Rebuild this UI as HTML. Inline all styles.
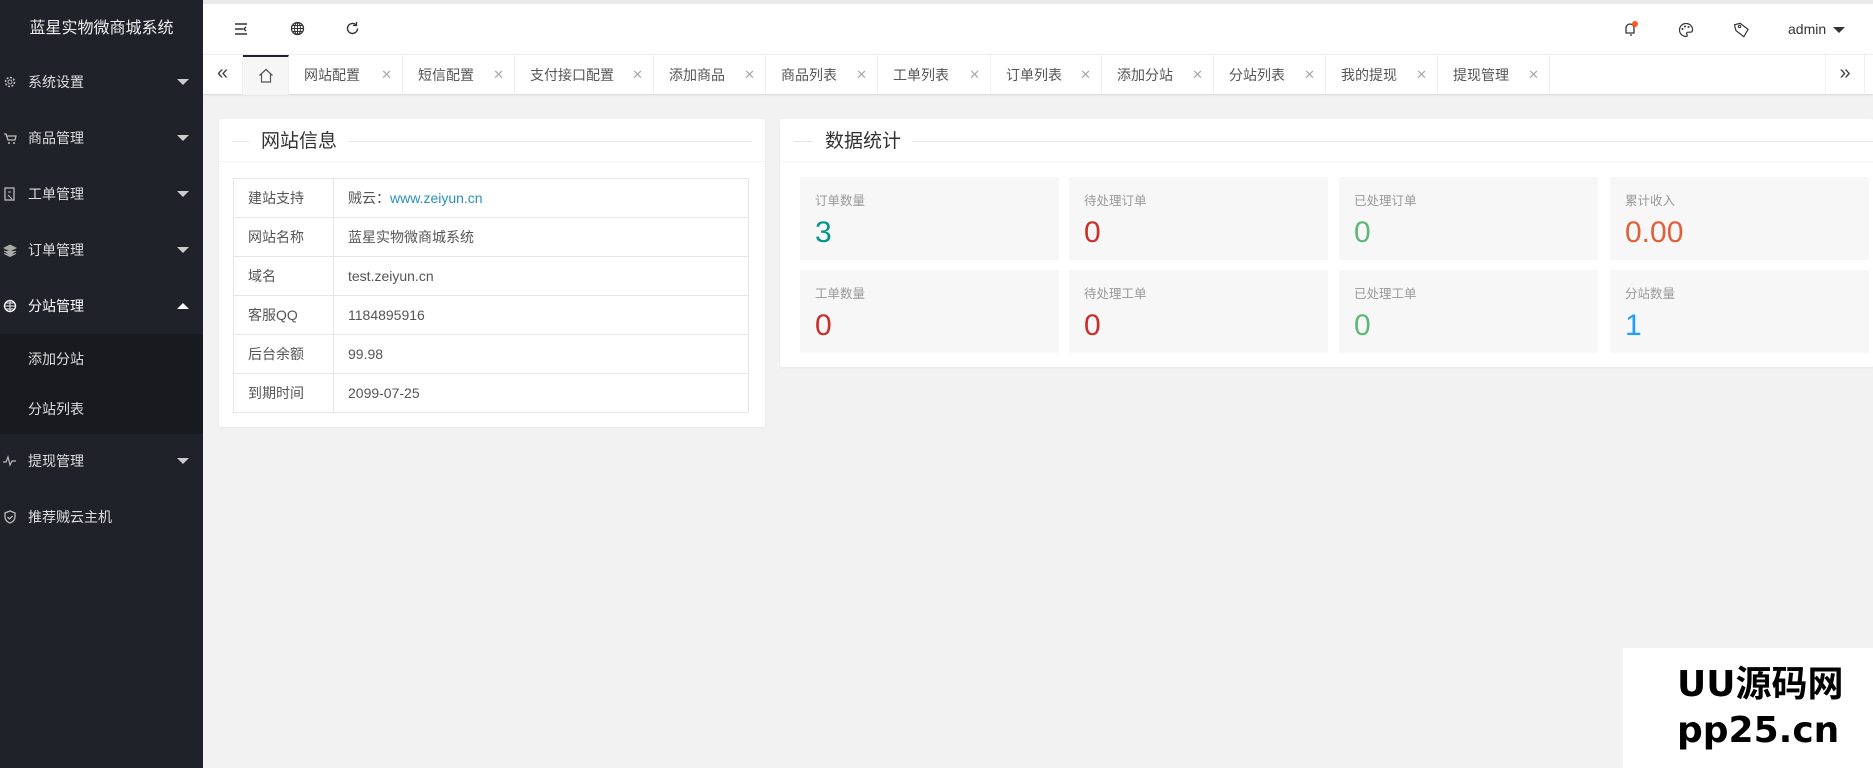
<!DOCTYPE html>
<html><head><meta charset="utf-8"><style>
*{margin:0;padding:0;box-sizing:border-box}
body{width:1873px;height:768px;overflow:hidden;background:#f2f2f2;font-family:"Liberation Sans","Noto Sans CJK SC",sans-serif;position:relative;color:#333}
.abs{position:absolute}
#side{left:0;top:0;width:203px;height:768px;background:#20222a;color:#e6e6e6}
.logo{position:absolute;left:0;top:0;width:203px;height:54px;line-height:58px;text-align:center;font-size:16px;color:#eee}
.mi{position:absolute;left:0;width:203px;height:56px;font-size:14px;color:#ddd}
.mi span.t{position:absolute;left:28px;top:50%;transform:translateY(-50%)}
.mi .ic{position:absolute;left:3px;top:50%;transform:translateY(-50%);width:14px;height:14px}
.mi .ar{position:absolute;right:14px;top:50%;margin-top:-3px;border-left:6px solid transparent;border-right:6px solid transparent;border-top:6px solid #ccc}
.mi .up{border-top:0;border-bottom:6px solid #fff}
#sub{left:0;top:334px;width:203px;height:100px;background:#191a1f}
#top{left:203px;top:0;width:1670px;height:54px;background:#fff;border-top:4px solid #eaeaea}
#tabs{left:203px;top:54px;width:1670px;height:40px;background:#fff;border-top:1px solid #f0f0f0;box-shadow:0 1px 2px rgba(0,0,0,.12)}
.tab{position:absolute;top:0;height:40px;border-right:1px solid #f0f0f0;font-size:14px;color:#555;line-height:40px;padding-left:15px}
.tab .x{position:absolute;right:10px;top:0;color:#aaa;font-size:13px}
.card{background:#fff;border-radius:2px;box-shadow:0 1px 2px rgba(0,0,0,.05)}
.ttl{position:absolute;left:0;right:0;top:0;height:43px;border-bottom:1px solid #f3f3f3}
.ttl .ln{position:absolute;left:14px;right:14px;top:22px;border-top:1px solid #e4e4e4}
.ttl .tx{position:absolute;left:30px;top:7px;background:#fff;padding:0 12px;font-size:19px;color:#333}
table{position:absolute;left:14px;top:59px;width:516px;border-collapse:collapse;font-size:14px;color:#555}
td{border:1px solid #e6e6e6;height:39px;padding-left:14px}
td.l{width:100px}
.st{position:absolute;width:259px;height:83px;background:#f7f7f7;border-radius:2px}
.st .lb{position:absolute;left:15px;top:13px;font-size:12.5px;color:#999}
.st .nm{position:absolute;left:15px;top:39px;font-size:30px;line-height:34px}
</style></head><body>
<div id="side" class="abs">
<div class="logo">蓝星实物微商城系统</div>
<div class="mi" style="top:54px"><svg class="ic" viewBox="0 0 14 14"><circle cx="7" cy="7" r="4.5" fill="none" stroke="#bbb" stroke-width="1.6" stroke-dasharray="2 1.5"/><circle cx="7" cy="7" r="2" fill="none" stroke="#bbb"/></svg><span class="t">系统设置</span><i class="ar"></i></div>
<div class="mi" style="top:110px"><svg class="ic" viewBox="0 0 14 14"><path d="M1 3h2l2 6h7l1-4H4" fill="none" stroke="#bbb" stroke-width="1.3"/><circle cx="6" cy="12" r="1" fill="#bbb"/><circle cx="11" cy="12" r="1" fill="#bbb"/></svg><span class="t">商品管理</span><i class="ar"></i></div>
<div class="mi" style="top:166px"><svg class="ic" viewBox="0 0 14 14"><rect x="2" y="1" width="9" height="12" fill="none" stroke="#bbb" stroke-width="1.3"/><path d="M5 5h3M5 8l4 4" stroke="#bbb"/></svg><span class="t">工单管理</span><i class="ar"></i></div>
<div class="mi" style="top:222px"><svg class="ic" viewBox="0 0 14 14"><path d="M7 2l6 3-6 3-6-3zM1 8l6 3 6-3M1 10.5l6 3 6-3" fill="#aaa" stroke="#aaa"/></svg><span class="t">订单管理</span><i class="ar"></i></div>
<div class="mi" style="top:278px;color:#fff"><svg class="ic" viewBox="0 0 14 14"><circle cx="7" cy="7" r="5.5" fill="none" stroke="#eee" stroke-width="1.4"/><path d="M1.5 7h11M7 1.5v11M3 4h8M3 10h8" stroke="#eee"/></svg><span class="t">分站管理</span><i class="ar up"></i></div>
<div id="sub" class="abs"></div>
<div class="mi" style="top:331px;height:56px"><span class="t">添加分站</span></div>
<div class="mi" style="top:381px;height:56px"><span class="t">分站列表</span></div>
<div class="mi" style="top:433px"><svg class="ic" viewBox="0 0 14 14"><path d="M0 8h3l2-5 2 8 2-4h4" fill="none" stroke="#bbb" stroke-width="1.2"/></svg><span class="t">提现管理</span><i class="ar"></i></div>
<div class="mi" style="top:489px"><svg class="ic" viewBox="0 0 14 14"><path d="M7 1l5 2v4c0 3-2.5 5-5 6-2.5-1-5-3-5-6V3z" fill="none" stroke="#bbb" stroke-width="1.3"/><path d="M4.5 7l2 2 3-3" fill="none" stroke="#bbb" stroke-width="1.3"/></svg><span class="t">推荐贼云主机</span></div>
</div>
<div id="top" class="abs">
<svg class="abs" style="left:31px;top:18px" width="14" height="14" viewBox="0 0 14 14"><path d="M1 2h12M1 7h8M1 12h12M12 5l-2 2 2 2" fill="none" stroke="#333" stroke-width="1.4"/></svg>
<svg class="abs" style="left:87px;top:17px" width="15" height="15" viewBox="0 0 15 15"><circle cx="7.5" cy="7.5" r="6" fill="none" stroke="#333" stroke-width="1.3"/><path d="M1.5 7.5h12M7.5 1.5v12M3 4.5h9M3 10.5h9" stroke="#333"/><ellipse cx="7.5" cy="7.5" rx="3" ry="6" fill="none" stroke="#333"/></svg>
<svg class="abs" style="left:142px;top:17px" width="15" height="15" viewBox="0 0 15 15"><path d="M12.5 7.5a5 5 0 1 1-1.5-3.6" fill="none" stroke="#333" stroke-width="1.4"/><path d="M11.5 1v3.5H8" fill="none" stroke="#333" stroke-width="1.3"/></svg>
<svg class="abs" style="left:1419px;top:16px" width="18" height="18" viewBox="0 0 18 18"><path d="M4 13V8a4 4 0 0 1 8 0v5H3.5M8 15h2" fill="none" stroke="#333" stroke-width="1.3"/><circle cx="13" cy="4" r="3" fill="#ff5722"/></svg>
<svg class="abs" style="left:1475px;top:18px" width="16" height="16" viewBox="0 0 16 16"><path d="M8 1.5a6.5 6.5 0 1 0 0 13c1.5 0 1.5-1.5.8-2.3-.7-.8 0-2 1.2-2h2c1.5 0 2.5-1 2.5-2.5C14.5 4 11.5 1.5 8 1.5z" fill="none" stroke="#333" stroke-width="1.2"/><circle cx="4.5" cy="7" r="1" fill="#333"/><circle cx="7" cy="4.5" r="1" fill="#333"/><circle cx="10.5" cy="5" r="1" fill="#333"/></svg>
<svg class="abs" style="left:1531px;top:17px" width="16" height="18" viewBox="0 0 16 18"><path d="M2 2h6l6 8-6 6-6-8z" fill="none" stroke="#333" stroke-width="1.2" transform="rotate(-15 8 9)"/><circle cx="5.5" cy="5.5" r="1.2" fill="none" stroke="#333"/></svg>
<div class="abs" style="left:1585px;top:17px;font-size:14px;color:#333">admin</div>
<i class="abs" style="left:1630px;top:23px;border-left:6px solid transparent;border-right:6px solid transparent;border-top:6px solid #333"></i>
</div>
<div id="tabs" class="abs">
<div class="tab" style="left:0;width:40px;padding:0;text-align:center;font-size:20px;color:#444;line-height:36px">«</div>
<div class="tab" style="left:40px;width:46px;padding:0;background:#f6f6f6;border-top:2px solid #20222a"><svg style="position:absolute;left:15px;top:11px" width="16" height="15" viewBox="0 0 16 15"><path d="M1.5 7.5L8 1.5l6.5 6M3.5 6v8h9V6" fill="none" stroke="#555" stroke-width="1.2"/></svg></div>
<div class="tab" style="left:86px;width:114px">网站配置<span class="x">✕</span></div>
<div class="tab" style="left:200px;width:112px">短信配置<span class="x">✕</span></div>
<div class="tab" style="left:312px;width:139px">支付接口配置<span class="x">✕</span></div>
<div class="tab" style="left:451px;width:112px">添加商品<span class="x">✕</span></div>
<div class="tab" style="left:563px;width:112px">商品列表<span class="x">✕</span></div>
<div class="tab" style="left:675px;width:113px">工单列表<span class="x">✕</span></div>
<div class="tab" style="left:788px;width:111px">订单列表<span class="x">✕</span></div>
<div class="tab" style="left:899px;width:112px">添加分站<span class="x">✕</span></div>
<div class="tab" style="left:1011px;width:112px">分站列表<span class="x">✕</span></div>
<div class="tab" style="left:1123px;width:112px">我的提现<span class="x">✕</span></div>
<div class="tab" style="left:1235px;width:112px">提现管理<span class="x">✕</span></div>
<div class="tab" style="left:1622px;width:40px;padding:0;text-align:center;font-size:20px;color:#444;line-height:36px;border-left:1px solid #f0f0f0">»</div>
</div>
<div class="abs card" style="left:219px;top:119px;width:546px;height:308px">
<div class="ttl"><div class="ln"></div><div class="tx">网站信息</div></div>
<table>
<tr><td class="l">建站支持</td><td>贼云：<span style="color:#2a8fbd">www.zeiyun.cn</span></td></tr>
<tr><td class="l">网站名称</td><td>蓝星实物微商城系统</td></tr>
<tr><td class="l">域名</td><td>test.zeiyun.cn</td></tr>
<tr><td class="l">客服QQ</td><td>1184895916</td></tr>
<tr><td class="l">后台余额</td><td>99.98</td></tr>
<tr><td class="l">到期时间</td><td>2099-07-25</td></tr>
</table>
</div>
<div class="abs card" style="left:780px;top:119px;width:1093px;height:248px">
<div class="ttl"><div class="ln" style="right:0"></div><div class="tx" style="left:33px">数据统计</div></div>
<div class="st" style="left:20px;top:58px"><div class="lb">订单数量</div><div class="nm" style="color:#009688">3</div></div>
<div class="st" style="left:289px;top:58px"><div class="lb">待处理订单</div><div class="nm" style="color:#c9302c">0</div></div>
<div class="st" style="left:559px;top:58px"><div class="lb">已处理订单</div><div class="nm" style="color:#5fb878">0</div></div>
<div class="st" style="left:830px;top:58px"><div class="lb">累计收入</div><div class="nm" style="color:#e0603a">0.00</div></div>
<div class="st" style="left:20px;top:151px"><div class="lb">工单数量</div><div class="nm" style="color:#c9302c">0</div></div>
<div class="st" style="left:289px;top:151px"><div class="lb">待处理工单</div><div class="nm" style="color:#c9302c">0</div></div>
<div class="st" style="left:559px;top:151px"><div class="lb">已处理工单</div><div class="nm" style="color:#5fb878">0</div></div>
<div class="st" style="left:830px;top:151px"><div class="lb">分站数量</div><div class="nm" style="color:#1e9fff">1</div></div>
</div>
<div class="abs" style="left:1623px;top:648px;width:250px;height:120px;background:#fff"></div>
<div class="abs" style="left:1677px;top:662px;font-size:36px;font-weight:bold;color:#000;line-height:46px;font-family:'DejaVu Sans','Noto Sans CJK SC',sans-serif">UU源码网<br>pp25.cn</div>
</body></html>
